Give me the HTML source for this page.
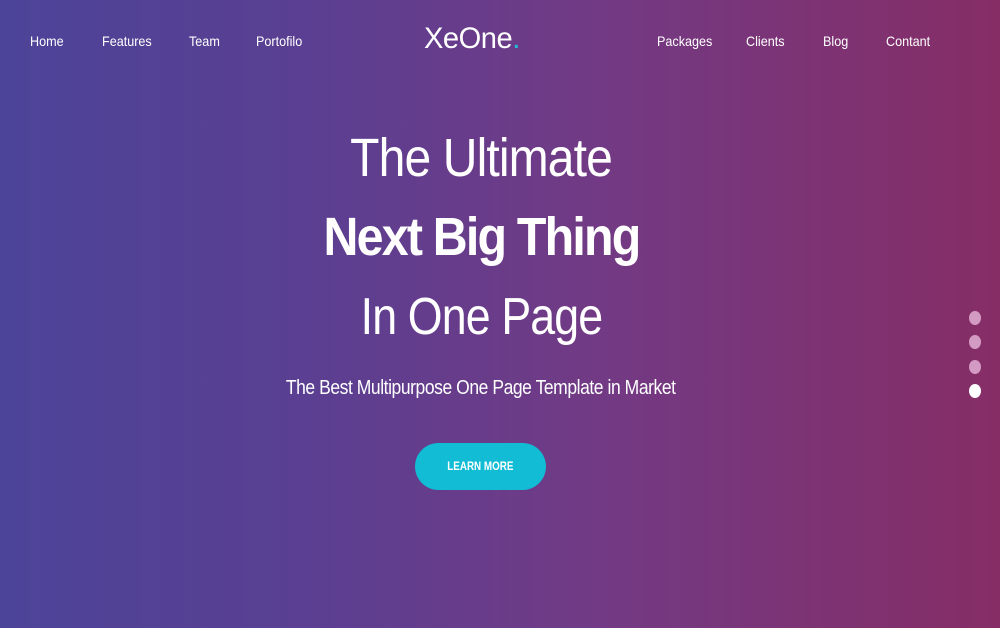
<!DOCTYPE html>
<html><head><style>
body{margin:0;width:1000px;height:628px;overflow:hidden;font-family:"Liberation Sans",sans-serif;color:#fff;
background:linear-gradient(90deg,#4c4499 0%,#5a3f92 30%,#723a84 60%,#862d66 100%);position:relative}
.n{position:absolute;top:33px;font-size:14px;transform:scaleX(0.9);transform-origin:left}
.t{position:absolute;left:0;width:962px;text-align:center}
.t span{display:inline-block}
.d{position:absolute;left:969px;width:12px;height:14px;border-radius:50%;background:#d39bc3}
</style></head><body>
<div class="n" style="left:30px">Home</div>
<div class="n" style="left:102px">Features</div>
<div class="n" style="left:189px">Team</div>
<div class="n" style="left:256px">Portofilo</div>
<div class="n" style="left:657px">Packages</div>
<div class="n" style="left:746px">Clients</div>
<div class="n" style="left:823px">Blog</div>
<div class="n" style="left:886px">Contant</div>
<div style="position:absolute;left:424px;top:22px;font-size:30px;letter-spacing:-0.5px;transform:scaleX(0.97);transform-origin:left"><span style="font-weight:300">Xe</span>One<span style="color:#1fc0d8">.</span></div>
<div class="t" style="top:127px;font-size:54px;font-weight:300;letter-spacing:-1px"><span style="transform:scaleX(0.89)">The Ultimate</span></div>
<div class="t" style="top:206px;font-size:54px;font-weight:bold;letter-spacing:-2px"><span style="transform:scaleX(0.895)">Next Big Thing</span></div>
<div class="t" style="top:287px;font-size:52px;font-weight:300;letter-spacing:-1px"><span style="transform:scaleX(0.86)">In One Page</span></div>
<div class="t" style="top:377px;font-size:20px;letter-spacing:-0.5px"><span style="transform:scaleX(0.875)">The Best Multipurpose One Page Template in Market</span></div>
<div style="position:absolute;left:415px;top:443px;width:131px;height:47px;border-radius:24px;background:#12bcd4;font-size:12px;font-weight:bold;line-height:47px;text-align:center"><span style="display:inline-block;transform:scaleX(0.82)">LEARN MORE</span></div>
<div class="d" style="top:311px"></div>
<div class="d" style="top:335px"></div>
<div class="d" style="top:360px"></div>
<div class="d" style="top:384px;background:#fff"></div>
</body></html>
